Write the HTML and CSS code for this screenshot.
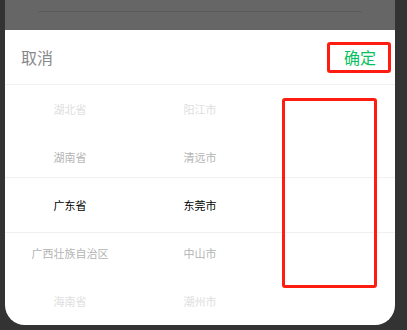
FILE: index.html
```html
<!DOCTYPE html>
<html>
	<head>
		<title>Picker</title>
		<link rel="stylesheet" href="styles.css">
	</head>
	<body>
	<div class="frame">
		<div class="backdrop">
			<div class="backdrop_line"></div>
		</div>
		<div class="sheet">
			<div class="toolbar">
				<span class="cancel">取消</span>
				<span class="confirm">确定</span>
			</div>
			<div class="picker">
				<div class="column">
					<div class="item far">湖北省</div>
					<div class="item near">湖南省</div>
					<div class="item active">广东省</div>
					<div class="item near">广西壮族自治区</div>
					<div class="item far">海南省</div>
				</div>
				<div class="column">
					<div class="item far">阳江市</div>
					<div class="item near">清远市</div>
					<div class="item active">东莞市</div>
					<div class="item near">中山市</div>
					<div class="item far">潮州市</div>
				</div>
				<div class="column"></div>
				<div class="indicator"></div>
				<div class="mark"></div>
			</div>
		</div>
	</div>
	</body>
</html>
```

FILE: styles.css
```css
html,
body {
  height: 100%;
}
body {
  margin: 0;
  background: #333;
  font-family: "Noto Sans CJK SC", "Liberation Sans", sans-serif;
}
.frame {
  width: 390px;
  margin-left: 5px;
}
.backdrop {
  height: 30px;
  background: #666;
  padding-top: 11px;
  box-sizing: border-box;
}
.backdrop_line {
  height: 1px;
  margin: 0 33px;
  background: #5b5b5b;
}
.sheet {
  background: #fff;
  height: 295px;
  border-radius: 0 0 20px 20px;
  overflow: hidden;
}
.toolbar {
  height: 54px;
  border-bottom: 1px solid #f0f0f0;
  display: flex;
  align-items: center;
  justify-content: space-between;
  padding: 0 4px 0 16px;
}
.cancel {
  font-size: 16px;
  color: #888;
}
.confirm {
  font-size: 16px;
  color: #07c160;
  width: 56px;
  height: 25px;
  line-height: 25px;
  text-align: center;
  padding-left: 2px;
  border: 3px solid #ff1c10;
  border-radius: 3px;
}
.picker {
  position: relative;
  display: flex;
  height: 240px;
}
.column {
  flex: 1;
}
.item {
  height: 48px;
  line-height: 48px;
  text-align: center;
  font-size: 11px;
  color: #000;
}
.item.near {
  color: #b4b4b4;
}
.item.far {
  color: #dedede;
}
.indicator {
  position: absolute;
  left: 0;
  right: 0;
  top: 92px;
  height: 54px;
  border-top: 1px solid #f0f0f0;
  border-bottom: 1px solid #f0f0f0;
}
.mark {
  position: absolute;
  left: 277px;
  top: 13px;
  width: 89px;
  height: 184px;
  border: 3px solid #ff1c10;
  border-radius: 3px;
}
```
